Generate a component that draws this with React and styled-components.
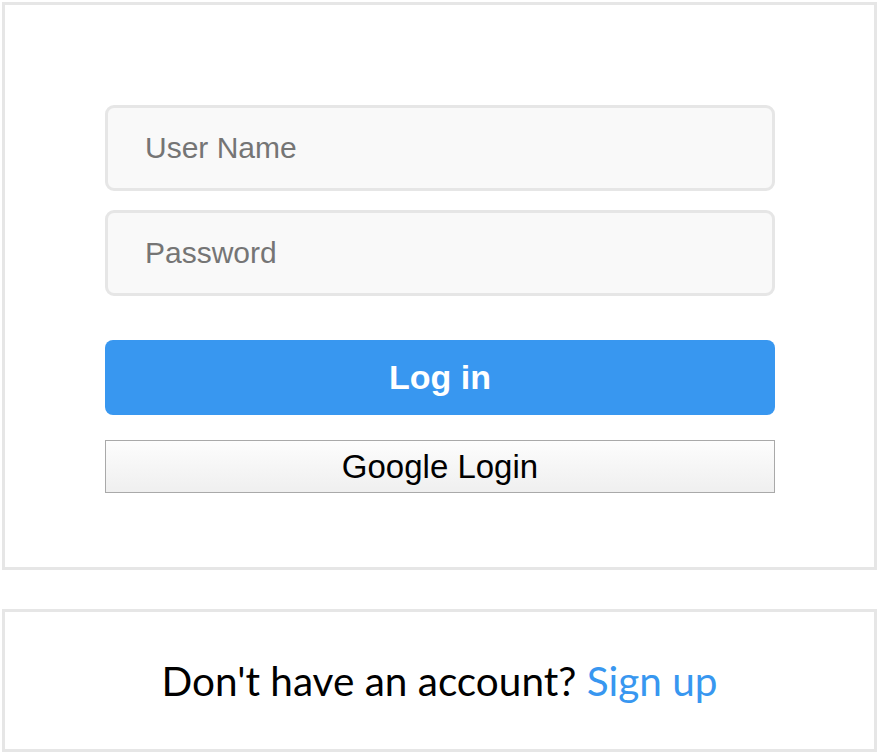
import styled, { createGlobalStyle } from "styled-components";

const GlobalStyle = createGlobalStyle`
  body {
    margin: 0;
    background: #fff;
    font-family: "Liberation Sans", Arial, sans-serif;
  }
`;

const Page = styled.div`
  padding: 2px;
  display: flex;
  flex-direction: column;
  gap: 39px;
`;

const Card = styled.div`
  border: 3px solid #e6e6e6;
  background: #fff;
`;

const Form = styled.form`
  display: flex;
  flex-direction: column;
  padding: 100px 99px 74px 100px;
`;

const Input = styled.input`
  box-sizing: border-box;
  height: 86px;
  width: 100%;
  margin-bottom: ${(p) => p.$gap}px;
  padding: 0 37px;
  border: 3px solid #e6e6e6;
  border-radius: 9px;
  background: #f9f9f9;
  font-family: "Liberation Sans", Arial, sans-serif;
  font-size: 30px;
  color: #333;
  outline: none;

  &::placeholder {
    color: #757575;
  }
`;

const LoginButton = styled.button`
  height: 75px;
  border: none;
  border-radius: 8px;
  background: #3897f0;
  color: #fff;
  font-family: "Liberation Sans", Arial, sans-serif;
  font-size: 34px;
  font-weight: bold;
  cursor: pointer;
  margin-bottom: 25px;
`;

const GoogleButton = styled.button`
  height: 53px;
  border: 1px solid #a9a9a9;
  border-radius: 0;
  background: linear-gradient(#fdfdfd, #efefef);
  color: #000;
  font-family: "Liberation Sans", Arial, sans-serif;
  font-size: 33px;
  cursor: pointer;
  padding: 0;
`;

const Footer = styled(Card)`
  height: 137px;
  display: flex;
  align-items: center;
  justify-content: center;
`;

const FooterText = styled.p`
  margin: 0;
  font-family: Lato, "Open Sans", sans-serif;
  font-size: 40.5px;
  color: #000;
`;

const SignUp = styled.a`
  color: #3897f0;
  text-decoration: none;
  cursor: pointer;
`;

const App = () => {
  return (
    <>
      <GlobalStyle />
      <Page>
        <Card>
          <Form onSubmit={(e) => e.preventDefault()}>
            <Input placeholder="User Name" $gap={19} />
            <Input placeholder="Password" type="password" $gap={44} />
            <LoginButton type="submit">Log in</LoginButton>
            <GoogleButton type="button">Google Login</GoogleButton>
          </Form>
        </Card>
        <Footer>
          <FooterText>
            Don't have an account? <SignUp>Sign up</SignUp>
          </FooterText>
        </Footer>
      </Page>
    </>
  );
};

export default App;
